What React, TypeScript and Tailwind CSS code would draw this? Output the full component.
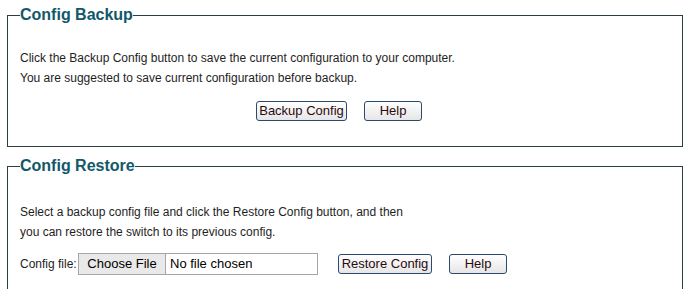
import React from "react";

const btn =
  "h-[20px] border border-[#2c4a6e] rounded-[3px] bg-gradient-to-b from-white to-[#e6e6e6] text-[13px] leading-[18px] text-[#2a0a10] px-[2px] box-border";

export default function App() {
  return (
    <div className="w-[692px] h-[289px] overflow-hidden bg-white font-['Liberation_Sans',Arial,sans-serif]">
      <fieldset className="ml-[7px] mt-[6px] w-[676px] border border-[#2a3e44] pl-[12px] pr-[12px] pt-[24px] pb-[25px] m-0 min-w-0">
        <legend className="p-0 text-[16px] leading-[18px] font-bold text-[#12586a]">Config Backup</legend>
        <div className="text-[12px] leading-[20px] text-[#1e1e1e]">
          <div>Click the Backup Config button to save the current configuration to your computer.</div>
          <div>You are suggested to save current configuration before backup.</div>
        </div>
        <div className="flex mt-[13px] pl-[236px] gap-[17px]">
          <button className={btn + " w-[91px]"}>Backup Config</button>
          <button className={btn + " w-[58px]"}>Help</button>
        </div>
      </fieldset>
      <fieldset className="ml-[7px] mt-[10px] w-[676px] border border-[#2a3e44] pl-[12px] pr-[12px] pt-[27px] pb-[30px] m-0 min-w-0">
        <legend className="p-0 text-[16px] leading-[18px] font-bold text-[#12586a]">Config Restore</legend>
        <div className="text-[12px] leading-[20px] text-[#1e1e1e]">
          <div>Select a backup config file and click the Restore Config button, and then</div>
          <div>you can restore the switch to its previous config.</div>
        </div>
        <div className="flex items-center mt-[11px]">
          <span className="text-[12px] leading-[22px] text-[#1e1e1e] w-[58px]">Config file:</span>
          <div className="flex h-[22px] w-[240px] border border-[#a6a6a6] box-border">
            <div className="w-[87px] h-full bg-[#e9e9e9] border-r border-[#a6a6a6] text-[13px] leading-[20px] text-black flex items-center justify-center">
              Choose File
            </div>
            <div className="pl-[4px] text-[13px] leading-[20px] text-black">No file chosen</div>
          </div>
          <div className="flex ml-[20px] gap-[17px]">
            <button className={btn + " w-[94px]"}>Restore Config</button>
            <button className={btn + " w-[58px]"}>Help</button>
          </div>
        </div>
      </fieldset>
    </div>
  );
}
